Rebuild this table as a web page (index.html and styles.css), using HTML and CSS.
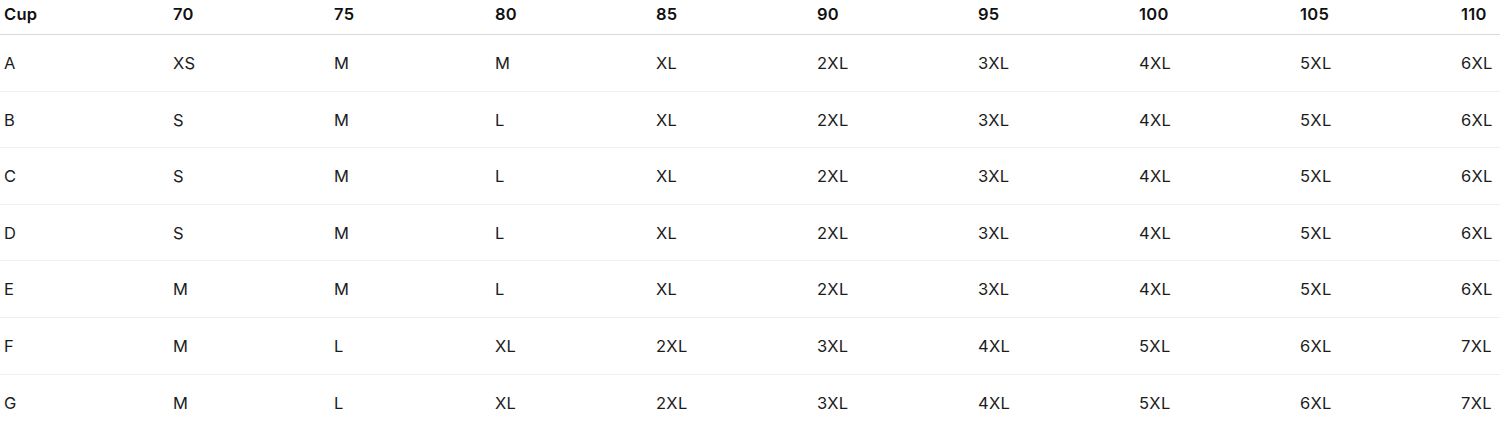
FILE: index.html
```html
<!DOCTYPE html>
<html lang="en">
<head>
<meta charset="utf-8">
<title>Size chart</title>
<link rel="stylesheet" href="styles.css">
</head>
<body>
<table class="size-table">
  <colgroup>
    <col class="col-first">
    <col class="col"><col class="col"><col class="col"><col class="col">
    <col class="col"><col class="col"><col class="col"><col class="col">
    <col class="col-last">
  </colgroup>
  <thead>
    <tr><th>Cup</th><th>70</th><th>75</th><th>80</th><th>85</th><th>90</th><th>95</th><th>100</th><th>105</th><th>110</th></tr>
  </thead>
  <tbody>
    <tr><td>A</td><td>XS</td><td>M</td><td>M</td><td>XL</td><td>2XL</td><td>3XL</td><td>4XL</td><td>5XL</td><td>6XL</td></tr>
    <tr><td>B</td><td>S</td><td>M</td><td>L</td><td>XL</td><td>2XL</td><td>3XL</td><td>4XL</td><td>5XL</td><td>6XL</td></tr>
    <tr><td>C</td><td>S</td><td>M</td><td>L</td><td>XL</td><td>2XL</td><td>3XL</td><td>4XL</td><td>5XL</td><td>6XL</td></tr>
    <tr><td>D</td><td>S</td><td>M</td><td>L</td><td>XL</td><td>2XL</td><td>3XL</td><td>4XL</td><td>5XL</td><td>6XL</td></tr>
    <tr><td>E</td><td>M</td><td>M</td><td>L</td><td>XL</td><td>2XL</td><td>3XL</td><td>4XL</td><td>5XL</td><td>6XL</td></tr>
    <tr><td>F</td><td>M</td><td>L</td><td>XL</td><td>2XL</td><td>3XL</td><td>4XL</td><td>5XL</td><td>6XL</td><td>7XL</td></tr>
    <tr><td>G</td><td>M</td><td>L</td><td>XL</td><td>2XL</td><td>3XL</td><td>4XL</td><td>5XL</td><td>6XL</td><td>7XL</td></tr>
  </tbody>
</table>
</body>
</html>
```
FILE: styles.css
```css
html, body {
  margin: 0;
  padding: 0;
  background: #ffffff;
}
body {
  font-family: Inter, "Noto Sans", "Liberation Sans", sans-serif;
  font-size: 16.5px;
  line-height: 24px;
  letter-spacing: 0.3px;
  color: #1c1c1c;
}
.size-table {
  width: 1500px;
  table-layout: fixed;
  border-collapse: collapse;
  border-spacing: 0;
}
.col-first { width: 169px; }
.col { width: 161px; }
.col-last { width: 43px; }
.size-table th {
  text-align: left;
  font-weight: 600;
  color: #111111;
  padding: 2px 4px 8px;
  border-bottom: 1px solid #d9d9d9;
  white-space: nowrap;
}
.size-table td {
  text-align: left;
  font-weight: 400;
  padding: 16px 4px 15.6px;
  border-bottom: 1px solid #efefef;
  white-space: nowrap;
}
.size-table tbody tr:last-child td {
  border-bottom: none;
}
```
